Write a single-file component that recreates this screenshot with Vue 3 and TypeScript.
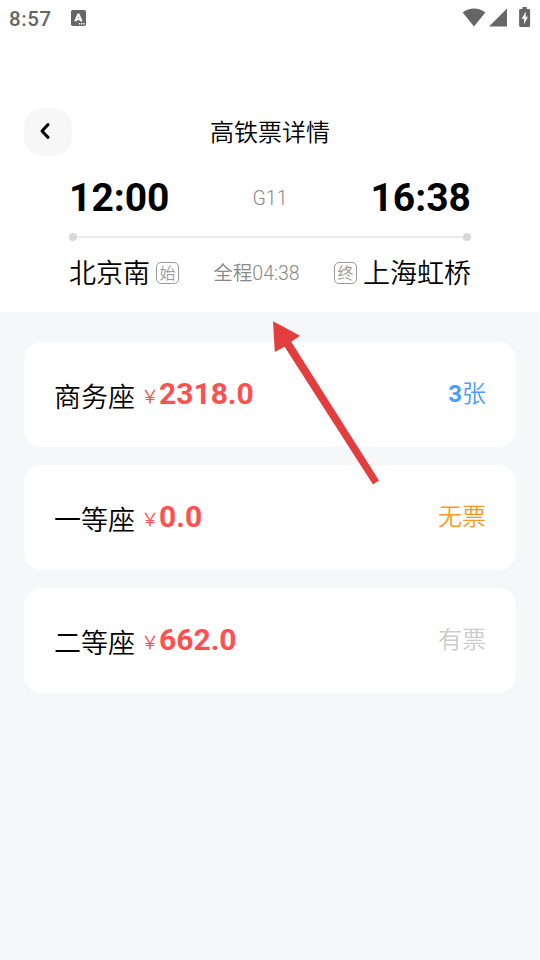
<script setup lang="ts">
interface Seat {
  name: string
  price: string
  count: string
  status: string
  tone: 'blue' | 'orange' | 'grey'
}

const seats: Seat[] = [
  { name: '商务座', price: '2318.0', count: '3', status: '张', tone: 'blue' },
  { name: '一等座', price: '0.0', count: '', status: '无票', tone: 'orange' },
  { name: '二等座', price: '662.0', count: '', status: '有票', tone: 'grey' },
]
</script>

<template>
  <main class="page">
    <section class="top">
      <div class="statusbar">
        <span class="clock">8:57</span>
        <svg class="notice" width="15" height="16" viewBox="0 0 15 16">
          <rect width="15" height="16" rx="1.8" fill="#666" />
          <path d="M4.2 11.4 7.2 4.6h.4L10.6 11.4M5.5 9.2h3.8" fill="none" stroke="#fff" stroke-width="2.1" />
          <path d="M7.8 13h1.4v1.4H7.8zM10 13h1.4v1.4H10zM12.2 13h1.4v1.4h-1.4z" fill="#fff" />
        </svg>
        <svg class="signals" width="70" height="22" viewBox="0 0 70 22">
          <path d="M.7 4.6C7.2-.8 16.8-.8 23.3 4.6L12 18.5z" fill="#666" />
          <path d="M45 .5v18H27z" fill="#666" />
          <path d="M58.3 .9h2.1V-1h4.4V.9h2.1q1.2 0 1.2 1.3v15.4q0 1.3-1.2 1.3h-8.6q-1.2 0-1.2-1.3V2.2q0-1.3 1.2-1.3z" fill="#666" />
          <path d="M63.8 3.5 59.7 10.8h2.4v5.5l3.8-7.6h-2.3z" fill="#fff" />
        </svg>
      </div>

      <header class="nav">
        <button class="back" aria-label="返回">
          <svg width="12" height="18" viewBox="0 0 12 18">
            <path d="M9 2.6 3 9l6 6.4" fill="none" stroke="#000" stroke-width="3" stroke-linecap="round" stroke-linejoin="round" />
          </svg>
        </button>
        <h1>高铁票详情</h1>
      </header>

      <div class="trip">
        <div class="times">
          <strong>12:00</strong>
          <span class="train">G11</span>
          <strong>16:38</strong>
        </div>
        <div class="track"><i></i><b></b><i></i></div>
        <div class="stations">
          <div class="station"><span>北京南</span><em>始</em></div>
          <span class="duration">全程04:38</span>
          <div class="station"><em>终</em><span>上海虹桥</span></div>
        </div>
      </div>
    </section>

    <section class="seats">
      <article v-for="seat in seats" :key="seat.name" class="seat">
        <span class="name">{{ seat.name }}</span>
        <span class="yen">￥</span>
        <strong class="price">{{ seat.price }}</strong>
        <span class="status" :class="seat.tone"><b v-if="seat.count">{{ seat.count }}</b>{{ seat.status }}</span>
      </article>
    </section>

    <svg class="arrow" width="108" height="166" viewBox="0 0 108 166">
      <path d="M1 1.3 28 15.8 19.2 21.7 107 160.5 101 164.5 12.6 26.8 2.8 32.1z" fill="#e43d3d" />
    </svg>
  </main>
</template>

<style>
body {
  margin: 0;
}
</style>

<style scoped>
.page {
  position: relative;
  width: 540px;
  height: 960px;
  overflow: hidden;
  background: #f5f7f9;
  color: #000;
  font-family: Roboto, "Noto Sans CJK SC", sans-serif;
  font-weight: 350;
}
.top {
  box-sizing: border-box;
  height: 312px;
  background: #fff;
}
.statusbar {
  display: flex;
  align-items: center;
  height: 36px;
  margin-bottom: 72px;
  padding: 0 8px 0 9px;
}
.clock {
  width: 62px;
  color: #666;
  font-size: 20.5px;
  font-weight: 480;
  line-height: 36px;
  letter-spacing: 0.6px;
  padding-top: 2px;
}
.signals {
  margin-left: auto;
  padding-top: 1px;
  overflow: visible;
}
.nav {
  display: grid;
  grid-template-columns: 48px 1fr 48px;
  height: 48px;
  padding: 0 24px;
}
.back {
  display: flex;
  align-items: center;
  width: 48px;
  height: 48px;
  padding: 0 0 2px 15px;
  border: 0;
  border-radius: 18px;
  background: #f7f7f7;
}
h1 {
  margin: 0;
  font-size: 24px;
  font-weight: 350;
  line-height: 50px;
  text-align: center;
}
.trip {
  padding: 0 69px;
}
.times,
.stations {
  display: flex;
  align-items: center;
  justify-content: space-between;
}
.times {
  box-sizing: border-box;
  height: 77px;
  padding-top: 8px;
}
.times strong {
  font-size: 39px;
  font-weight: 700;
  line-height: 69px;
}
.train,
.duration {
  color: #888;
  font-size: 19.5px;
}
.track {
  display: flex;
  align-items: center;
  height: 7px;
}
.track i {
  width: 8px;
  height: 8px;
  border-radius: 50%;
  background: #d8d8d8;
}
.track b {
  flex: 1;
  height: 2px;
  background: #ebebeb;
}
.stations {
  height: 66px;
}
.duration {
  padding-top: 2px;
  line-height: 30px;
}
.station {
  display: flex;
  align-items: center;
  gap: 6px;
  font-size: 27px;
  line-height: 40px;
}
.station > span {
  padding-top: 2px;
}
.station em {
  box-sizing: border-box;
  width: 23px;
  height: 22px;
  border: 1px solid #999;
  border-radius: 5px;
  color: #999;
  font-size: 16px;
  font-style: normal;
  line-height: 21px;
  text-align: center;
}
.seats {
  display: flex;
  flex-direction: column;
  gap: 18px;
  padding: 30px 24px;
}
.seat {
  display: flex;
  align-items: flex-start;
  box-sizing: border-box;
  height: 105px;
  padding: 22px 30px 0;
  border-radius: 18px;
  background: #fff;
  line-height: 60px;
}
.name {
  padding-top: 4px;
  font-size: 27px;
}
.yen {
  margin-left: 6px;
  padding-top: 3px;
  color: #ff5050;
  font-size: 18px;
}
.price {
  color: #ff5050;
  font-size: 30px;
  font-weight: 700;
}
.status {
  margin-left: auto;
  font-size: 24px;
}
.status b {
  font-weight: 700;
}
.blue {
  color: #4a9df8;
}
.orange {
  color: #ff9822;
}
.grey {
  color: #ccc;
}
.arrow {
  position: absolute;
  left: 272px;
  top: 320px;
}
</style>
